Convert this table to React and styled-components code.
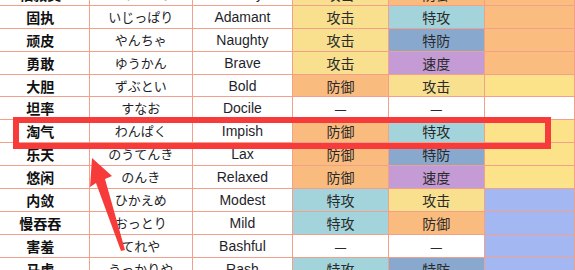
import styled, { createGlobalStyle } from "styled-components";

const Global = createGlobalStyle`
  html, body { margin: 0; padding: 0; background: #fff; overflow: hidden; }
  body { width: 575px; height: 270px; }
`;

const Page = styled.div`
  position: relative;
  width: 575px;
  height: 270px;
  overflow: hidden;
`;

const Table = styled.table`
  border-collapse: collapse;
  table-layout: fixed;
  margin-top: -18px;
  margin-left: -9px;
  font-family: "Liberation Sans", "Noto Sans CJK SC", sans-serif;
  font-size: 14px;
  color: #1f1f2a;
`;

const Row = styled.tr`
  height: 22.9px;
`;

const colors = {
  atk: "#f9e08f",
  def: "#fabb7e",
  spa: "#a3d4db",
  spd: "#88a9cd",
  spe: "#c59bd6",
  none: "#ffffff",
  orange: "#fbbc80",
  yellow: "#fce38a",
  lav: "#a3b8f2",
};

const Cell = styled.td`
  width: ${(p) => p.$w || 111}px;
  padding: 0;
  border: 1px solid #f2a08c;
  text-align: center;
  vertical-align: middle;
  line-height: 20px;
  white-space: nowrap;
  overflow: hidden;
  background: ${(p) => colors[p.$bg] || "#fff"};
`;

const NameCell = styled(Cell)`
  font-family: "Noto Sans CJK SC", sans-serif;
  font-weight: 700;
  color: #111;
  font-size: 14px;
`;

const KanaCell = styled(Cell)`
  font-family: "Noto Sans CJK JP", sans-serif;
  font-size: 13px;
`;

const StatCell = styled(Cell)`
  font-family: "Noto Sans CJK SC", sans-serif;
  font-size: 14px;
  color: #2a2a2a;
`;

const Marker = styled.div`
  position: absolute;
  left: 13px;
  top: 117px;
  width: 538px;
  height: 32px;
  box-sizing: border-box;
  border: 6px solid #f73a3a;
`;

const Arrow = styled.svg`
  position: absolute;
  left: 0;
  top: 0;
  pointer-events: none;
`;

const stat = { 攻击: "atk", 防御: "def", 特攻: "spa", 特防: "spd", 速度: "spe", "—": "none" };

const rows = [
  ["怕寂寞", "さみしがり", "Lonely", "攻击", "防御", "orange"],
  ["固执", "いじっぱり", "Adamant", "攻击", "特攻", "orange"],
  ["顽皮", "やんちゃ", "Naughty", "攻击", "特防", "orange"],
  ["勇敢", "ゆうかん", "Brave", "攻击", "速度", "orange"],
  ["大胆", "ずぶとい", "Bold", "防御", "攻击", "yellow"],
  ["坦率", "すなお", "Docile", "—", "—", "none"],
  ["淘气", "わんぱく", "Impish", "防御", "特攻", "yellow"],
  ["乐天", "のうてんき", "Lax", "防御", "特防", "yellow"],
  ["悠闲", "のんき", "Relaxed", "防御", "速度", "yellow"],
  ["内敛", "ひかえめ", "Modest", "特攻", "攻击", "lav"],
  ["慢吞吞", "おっとり", "Mild", "特攻", "防御", "lav"],
  ["害羞", "てれや", "Bashful", "—", "—", "lav"],
  ["马虎", "うっかりや", "Rash", "特攻", "特防", "lav"],
];

export default function App() {
  return (
    <Page>
      <Global />
      <Table>
        <tbody>
          {rows.map((r) => (
            <Row key={r[0]}>
              <NameCell $w={110}>{r[0]}</NameCell>
              <KanaCell>{r[1]}</KanaCell>
              <Cell $w={110}>{r[2]}</Cell>
              <StatCell $bg={stat[r[3]]}>{r[3]}</StatCell>
              <StatCell $bg={stat[r[4]]}>{r[4]}</StatCell>
              <Cell $bg={r[5]}></Cell>
            </Row>
          ))}
        </tbody>
      </Table>
      <Marker />
      <Arrow width="575" height="270" viewBox="0 0 575 270">
        <polygon
          points="92,158 112,176 105,179 125,250 121,251 96,183 90,187"
          fill="#f73a3a"
        />
      </Arrow>
    </Page>
  );
}
